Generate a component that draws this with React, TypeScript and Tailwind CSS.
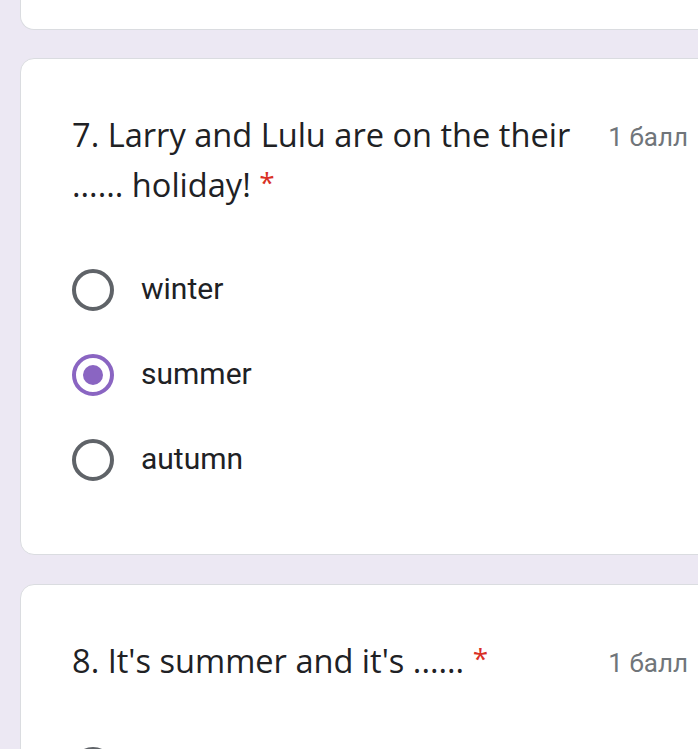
import React from "react"

type Option = { label: string; checked?: boolean }

const Q7_OPTIONS: Option[] = [
    { label: "winter" },
    { label: "summer", checked: true },
    { label: "autumn" },
]

function Radio({ checked }: { checked?: boolean }) {
    return (
        <div
            className={
                checked
                    ? "h-[42px] w-[42px] shrink-0 rounded-full border-[4px] border-[#8a65c2] flex items-center justify-center"
                    : "h-[42px] w-[42px] shrink-0 rounded-full border-[4px] border-[#5f6368]"
            }
        >
            {checked && <div className="h-[20px] w-[20px] rounded-full bg-[#8a65c2]" />}
        </div>
    )
}

function Points() {
    return (
        <span className="shrink-0 pt-[2px] text-[26px] leading-[50px] text-[#70757a] font-['Roboto',sans-serif]">
            1 балл
        </span>
    )
}

function Required() {
    return <span className="relative -top-[4px] text-[28px] leading-none text-[#d93025]">*</span>
}

export default function App() {
    return (
        <div className="h-[749px] w-[698px] overflow-hidden bg-[#ece8f3] pl-[20px]">
            {/* previous card, mostly scrolled away */}
            <div className="h-[30px] w-[700px] rounded-b-[14px] border border-t-0 border-[#dadce0] bg-white" />

            {/* Question 7 */}
            <div className="mt-[28px] w-[700px] rounded-[14px] border border-[#dadce0] bg-white pl-[51px] pr-[23px] pt-[51px] pb-[52px]">
                <div className="flex w-[616px] justify-between gap-[20px]">
                    <p className="w-[530px] text-[32.6px] leading-[50px] text-[#202124] font-['Open_Sans',sans-serif]">
                        7. Larry and Lulu are on the their ...... holiday! <Required />
                    </p>
                    <Points />
                </div>

                <div className="mt-[37px] flex flex-col">
                    {Q7_OPTIONS.map((opt) => (
                        <div key={opt.label} className="flex h-[85px] items-center gap-[27px]">
                            <Radio checked={opt.checked} />
                            <span className="-mt-[3px] text-[30px] text-[#202124] font-['Roboto',sans-serif]">{opt.label}</span>
                        </div>
                    ))}
                </div>
            </div>

            {/* Question 8 */}
            <div className="mt-[29px] w-[700px] rounded-[14px] border border-[#dadce0] bg-white pl-[51px] pr-[23px] pt-[51px] pb-[52px]">
                <div className="flex w-[616px] justify-between gap-[20px]">
                    <p className="w-[530px] text-[32.6px] leading-[50px] text-[#202124] font-['Open_Sans',sans-serif]">
                        8. It's summer and it's ...... <Required />
                    </p>
                    <Points />
                </div>

                <div className="mt-[37px] flex flex-col">
                    <div className="flex h-[85px] items-center gap-[27px]">
                        <Radio />
                    </div>
                </div>
            </div>
        </div>
    )
}
